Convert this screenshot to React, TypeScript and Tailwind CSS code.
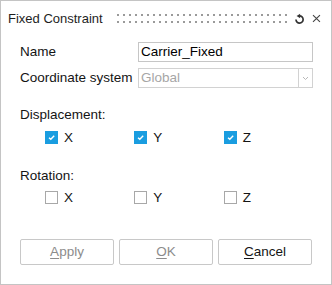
import React from "react";

const font = { fontFamily: '"Liberation Sans", Arial, sans-serif' };

function Check({ checked, label }: { checked: boolean; label: string }) {
  return (
    <div className="flex items-center w-[91px] h-[13px]">
      {checked ? (
        <div className="w-[13px] h-[13px] bg-[#1a9de0] flex items-center justify-center">
          <svg width="9" height="9" viewBox="0 0 9 9">
            <path d="M2 4.7 L3.8 6.3 L7.2 2.8" stroke="white" strokeWidth="1.4" fill="none" />
          </svg>
        </div>
      ) : (
        <div className="w-[13px] h-[13px] border border-[#a8a8a8] bg-white" />
      )}
      <span className="ml-[6px] text-[13.5px] leading-[15px] text-[#141414]">{label}</span>
    </div>
  );
}

function Btn({ label, u, disabled }: { label: string; u: string; disabled?: boolean }) {
  const rest = label.slice(1);
  return (
    <div
      className={`w-[94px] h-[26px] border border-[#c8c8c8] rounded-[2px] bg-white flex items-center justify-center text-[13.5px] ${
        disabled ? "text-[#8c8c8c]" : "text-[#141414]"
      }`}
    >
      <span>
        <span className="underline underline-offset-2">{u}</span>
        {rest}
      </span>
    </div>
  );
}

export default function App() {
  const dots = Array.from({ length: 29 });
  return (
    <div style={font} className="w-[332px] h-[285px] border border-[#c4c4c4] bg-white flex flex-col text-[#141414]">
      <div className="h-[35px] flex items-center pl-[7px] pr-[10px]">
        <span className="text-[13px] text-[#1e1e1e] w-[110px]">Fixed Constraint</span>
        <div className="flex flex-col gap-[5px]">
          {[0, 1].map((r) => (
            <div key={r} className="flex gap-[4px]">
              {dots.map((_, i) => (
                <div key={i} className="w-[2px] h-[2px] bg-[#9a9a9a]" />
              ))}
            </div>
          ))}
        </div>
        <svg className="ml-[7px]" width="11" height="12" viewBox="0 0 11 12">
          <path d="M2 6.5 A3.6 3.6 0 1 0 5.5 2.9" stroke="#333" strokeWidth="1.7" fill="none" />
          <path d="M2.6 2.9 L6.2 0.6 L6.2 5.2 Z" fill="#333" />
        </svg>
        <svg className="ml-[7px]" width="9" height="9" viewBox="0 0 9 9">
          <path d="M1 1 L8 8 M8 1 L1 8" stroke="#444" strokeWidth="1.1" />
        </svg>
      </div>
      <div className="pl-[19px] pr-[18px] pt-[6px] flex flex-col">
        <div className="flex items-center h-[20px]">
          <span className="w-[118px] text-[13.5px]">Name</span>
          <div className="flex-1 h-[20px] border border-[#c6c6c6] flex items-center pl-[2px] text-[13.5px] text-black">
            Carrier_Fixed
          </div>
        </div>
        <div className="flex items-center h-[20px] mt-[6px]">
          <span className="w-[118px] text-[13.5px] whitespace-nowrap">Coordinate system</span>
          <div className="flex-1 h-[20px] border border-[#d2d2d2] flex items-center text-[13.5px] text-[#a6a6a6]">
            <span className="flex-1 pl-[2px]">Global</span>
            <div className="w-[14px] h-full border-l border-[#d2d2d2] flex items-center justify-center">
              <svg width="7" height="5" viewBox="0 0 7 5">
                <path d="M1 1 L3.5 3.5 L6 1" stroke="#b8b8b8" strokeWidth="1" fill="none" />
              </svg>
            </div>
          </div>
        </div>
        <div className="mt-[19px] h-[15px] leading-[15px] text-[13.5px]">Displacement:</div>
        <div className="mt-[9px] pl-[25px] flex">
          <Check checked label="X" />
          <Check checked label="Y" />
          <Check checked label="Z" />
        </div>
        <div className="mt-[24px] h-[15px] leading-[15px] text-[13.5px]">Rotation:</div>
        <div className="mt-[8px] pl-[25px] flex">
          <Check checked={false} label="X" />
          <Check checked={false} label="Y" />
          <Check checked={false} label="Z" />
        </div>
        <div className="mt-[35px] flex gap-[5px]">
          <Btn label="Apply" u="A" disabled />
          <Btn label="OK" u="O" disabled />
          <Btn label="Cancel" u="C" />
        </div>
      </div>
    </div>
  );
}
